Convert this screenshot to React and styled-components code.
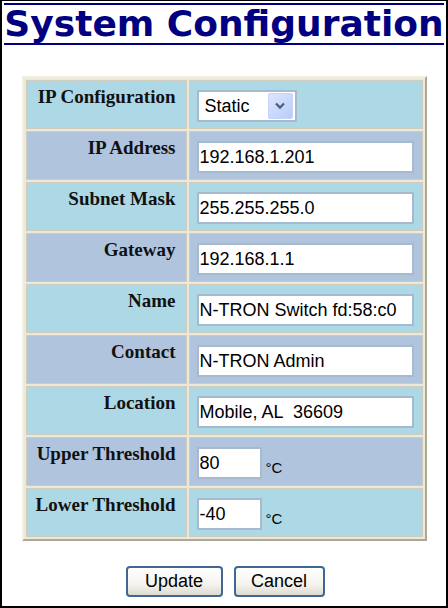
import React from 'react';
import styled, { createGlobalStyle } from 'styled-components';

const GlobalStyle = createGlobalStyle`
  html, body {
    margin: 0;
    padding: 0;
    background: #ffffff;
  }
`;

const Frame = styled.div`
  box-sizing: border-box;
  width: 448px;
  height: 608px;
  border: 2px solid #000000;
  border-top-width: 1px;
  background: #ffffff;
  display: flex;
  flex-direction: column;
  align-items: center;
  padding-top: 2px;
`;

const Title = styled.h1`
  margin: 0;
  font-family: "DejaVu Sans", Verdana, sans-serif;
  font-weight: bold;
  font-size: 36px;
  line-height: 36px;
  color: #000080;
  border-top: 2px solid #000080;
  border-bottom: 2px solid #000080;
  padding: 1px 0 1px;
  white-space: nowrap;
`;

const Table = styled.table`
  margin-top: 31px;
  width: 405px;
  border-collapse: separate;
  border-spacing: 2px;
  background: #ece9d8;
  border: 2px solid;
  border-color: #f1efe2 #aca899 #aca899 #f1efe2;
`;

const Row = styled.tr`
  background: ${(p) => (p.$dark ? '#b0c4de' : '#add8e6')};
`;

const Label = styled.td`
  box-sizing: border-box;
  width: 163px;
  padding: 5px 10px 5px 6px;
  border: 1px solid #cfccbd;
  vertical-align: top;
  text-align: right;
  font-family: "Liberation Serif", "Times New Roman", serif;
  font-weight: bold;
  font-size: 19px;
  color: #111111;
  white-space: nowrap;
`;

const Value = styled.td`
  padding: 9px 8px 6px 7px;
  border: 1px solid #cfccbd;
  vertical-align: top;
`;

const TextInput = styled.input`
  box-sizing: border-box;
  display: block;
  width: ${(p) => p.$w || 217}px;
  height: 32px;
  margin: 0;
  padding: 0 1px;
  border: 2px solid #a5b9cf;
  background: #ffffff;
  font-family: "Liberation Sans", Arial, sans-serif;
  font-size: 18px;
  color: #000000;
  outline: none;
`;

const SelectBox = styled.div`
  box-sizing: border-box;
  width: 100px;
  height: 32px;
  display: flex;
  align-items: center;
  justify-content: space-between;
  border: 2px solid #a5b9cf;
  background: #ffffff;
  padding: 0 2px 0 6px;
  font-family: "Liberation Sans", Arial, sans-serif;
  font-size: 18px;
  color: #000000;
`;

const ArrowBox = styled.span`
  box-sizing: border-box;
  width: 25px;
  height: 26px;
  display: flex;
  align-items: center;
  justify-content: center;
  border: 1px solid #c3d3fd;
  border-radius: 2px;
  background: linear-gradient(135deg, #dce6ff 0%, #b9ccf8 100%);
`;

const TempWrap = styled.div`
  display: flex;
  align-items: flex-end;
  gap: 4px;
`;

const Unit = styled.span`
  font-family: "Liberation Sans", Arial, sans-serif;
  font-size: 15px;
  color: #000000;
  margin-bottom: 3px;
`;

const Buttons = styled.div`
  margin-top: 25px;
  display: flex;
  gap: 11px;
  padding-left: 2px;
`;

const Button = styled.button`
  box-sizing: border-box;
  width: ${(p) => p.$w}px;
  height: 31px;
  border: 2px solid #3f6791;
  border-radius: 4px;
  background: linear-gradient(180deg, #ffffff 0%, #f4f3ee 60%, #dedbcf 100%);
  font-family: "Liberation Sans", Arial, sans-serif;
  font-size: 18px;
  color: #000000;
  padding: 0;
  cursor: pointer;
`;

const Chevron = () => (
  <svg width="12" height="8" viewBox="0 0 12 8">
    <path d="M2 1.5 L6 5.5 L10 1.5" fill="none" stroke="#4d6185" strokeWidth="2.4" />
  </svg>
);

const rows = [
  { label: 'IP Address', value: '192.168.1.201' },
  { label: 'Subnet Mask', value: '255.255.255.0' },
  { label: 'Gateway', value: '192.168.1.1' },
  { label: 'Name', value: 'N-TRON Switch fd:58:c0' },
  { label: 'Contact', value: 'N-TRON Admin' },
  { label: 'Location', value: 'Mobile, AL  36609' },
];

const temps = [
  { label: 'Upper Threshold', value: '80' },
  { label: 'Lower Threshold', value: '-40' },
];

const App = () => {
  return (
    <>
      <GlobalStyle />
      <Frame>
        <Title>System Configuration</Title>
        <Table>
          <tbody>
            <Row>
              <Label>IP Configuration</Label>
              <Value>
                <SelectBox>
                  Static
                  <ArrowBox>
                    <Chevron />
                  </ArrowBox>
                </SelectBox>
              </Value>
            </Row>
            {rows.map((r, i) => (
              <Row key={r.label} $dark={i % 2 === 0}>
                <Label>{r.label}</Label>
                <Value>
                  <TextInput defaultValue={r.value} />
                </Value>
              </Row>
            ))}
            {temps.map((t, i) => (
              <Row key={t.label} $dark={i % 2 === 0}>
                <Label>{t.label}</Label>
                <Value>
                  <TempWrap>
                    <TextInput $w={65} defaultValue={t.value} />
                    <Unit>°C</Unit>
                  </TempWrap>
                </Value>
              </Row>
            ))}
          </tbody>
        </Table>
        <Buttons>
          <Button $w={97}>Update</Button>
          <Button $w={91}>Cancel</Button>
        </Buttons>
      </Frame>
    </>
  );
};

export default App;
